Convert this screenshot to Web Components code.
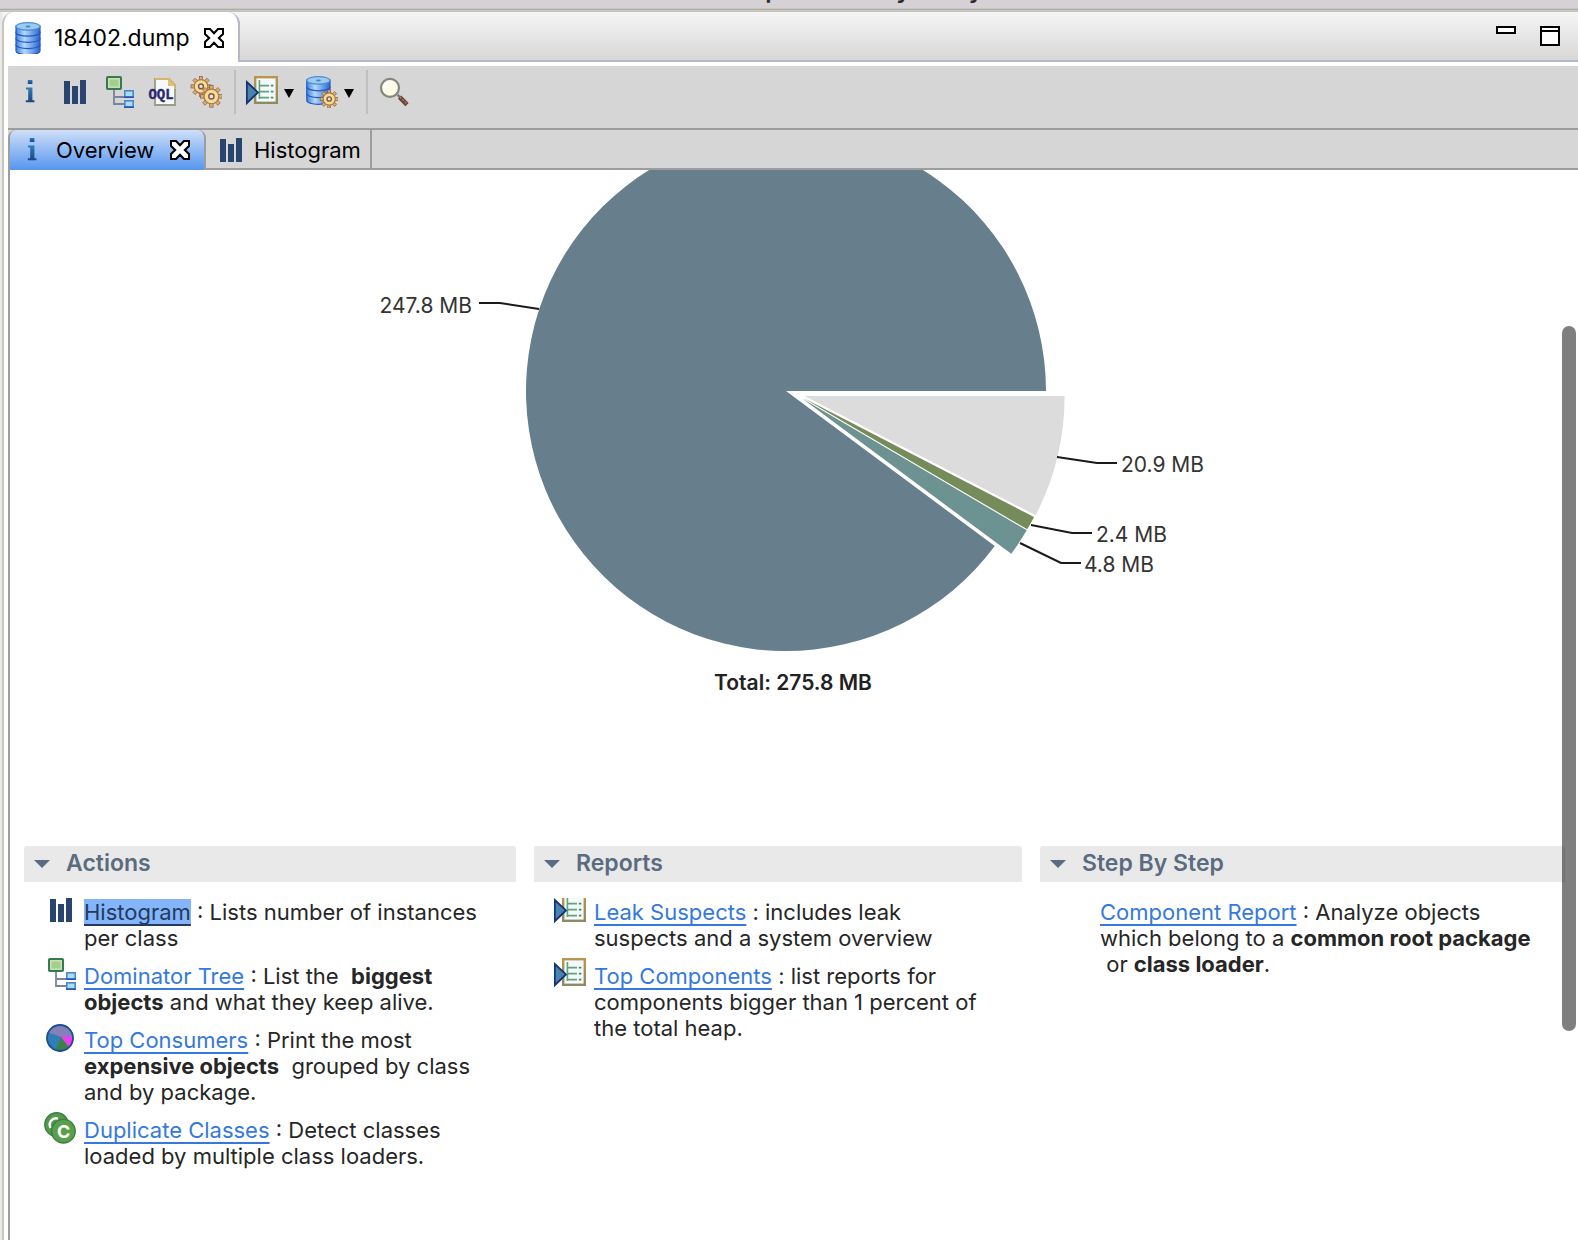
<!DOCTYPE html>
<html lang="en">
<head>
<meta charset="utf-8">
<title>Eclipse Memory Analyzer</title>
<style>
  html, body { margin: 0; height: 100%; }
  body { font-family: Inter, "Liberation Sans", sans-serif; font-size: 22px; color: #000; background: #fff; overflow: hidden; }
</style>
</head>
<body>
<mat-window>
  <mat-title slot="title">Eclipse Memory Analyzer</mat-title>
  <editor-tabs slot="tabs" label="18402.dump"></editor-tabs>
  <mat-toolbar slot="toolbar"></mat-toolbar>
  <page-tabs slot="pages"></page-tabs>
  <heap-pie></heap-pie>
  <section-grid>
    <tool-section heading="Actions">
      <tool-entry icon="hist"><tool-link selected>Histogram</tool-link> : Lists number of instances<br>per class</tool-entry>
      <tool-entry icon="tree"><tool-link>Dominator Tree</tool-link> : List the &nbsp;<b>biggest<br>objects</b> and what they keep alive.</tool-entry>
      <tool-entry icon="pie"><tool-link>Top Consumers</tool-link> : Print the most<br><b>expensive objects</b> &nbsp;grouped by class<br>and by package.</tool-entry>
      <tool-entry icon="dup"><tool-link>Duplicate Classes</tool-link> : Detect classes<br>loaded by multiple class loaders.</tool-entry>
    </tool-section>
    <tool-section heading="Reports">
      <tool-entry icon="report" cut><tool-link>Leak Suspects</tool-link> : includes leak<br>suspects and a system overview</tool-entry>
      <tool-entry icon="report"><tool-link>Top Components</tool-link> : list reports for<br>components bigger than 1 percent of<br>the total heap.</tool-entry>
    </tool-section>
    <tool-section heading="Step By Step">
      <tool-entry><tool-link>Component Report</tool-link> : Analyze objects<br>which belong to a <b>common root package</b><br>&nbsp;or <b>class loader</b>.</tool-entry>
    </tool-section>
  </section-grid>
</mat-window>

<script>
const cog = (cx, cy, r) => {
  let teeth = '';
  for (let a = 0; a < 360; a += 45)
    teeth += `<rect x="${cx - r * .16}" y="${cy - r}" width="${r * .32}" height="${r * .5}" fill="#dcae6c" stroke="#8a5a48" stroke-width=".35" transform="rotate(${a} ${cx} ${cy})"/>`;
  return teeth + `<circle cx="${cx}" cy="${cy}" r="${r * .68}" fill="#f8dc92" stroke="#a87848" stroke-width=".6"/>
    <circle cx="${cx}" cy="${cy}" r="${r * .24}" fill="#e6e0dc" stroke="#80584a" stroke-width=".7"/>`;
};
const disks = (x, y, w, n, step) => {
  let s = '';
  for (let i = n - 1; i >= 0; i--) {
    const t = y + i * step;
    s += `<path d="M${x} ${t + 1.8}v${step}a${w / 2} 1.9 0 0 0 ${w} 0v-${step}z" fill="url(#dk)" stroke="#2458c4" stroke-width=".6"/>`;
  }
  return `<defs><linearGradient id="dk"><stop offset="0" stop-color="#3f83dc"/><stop offset=".35" stop-color="#b4d9fa"/><stop offset="1" stop-color="#2a68cf"/></linearGradient></defs>${s}
    <ellipse cx="${x + w / 2}" cy="${y + 1.9}" rx="${w / 2}" ry="1.9" fill="#9ccbf0" stroke="#4b8bd8" stroke-width=".6"/>
    <ellipse cx="${x + w / 2}" cy="${y + 1.9}" rx="1.2" ry=".5" fill="#4a83b8"/>`;
};
const ICONS = {
  info: `<defs><linearGradient id="ig" x2="0" y2="1"><stop offset="0" stop-color="#2f7dbb"/><stop offset="1" stop-color="#1c4480"/></linearGradient></defs>
    <g fill="url(#ig)"><path d="M6.9 2h2.3v2H6.9z"/><path d="M6 5.8h3.2v6.3h1v1H5.9v-1h1.2V6.8H6z"/></g>`,
  hist: `<path fill="#2a4470" d="M3 2.5h3V14H3zM7 5h3v9H7zM11 2h3v12h-3z"/>`,
  tree: `<path d="M6 7v7h5M6 10.5h5" fill="none" stroke="#75859b" stroke-width=".9"/>
    <rect x="2.5" y=".5" width="7" height="6" rx=".4" fill="#a5cd8c" stroke="#387a50"/><rect x="3.4" y="1.4" width="5.2" height="4.2" fill="none" stroke="#c9e2b9" stroke-width=".7"/>
    <g stroke-width=".8"><rect x="11.4" y="7.4" width="4.2" height="3" fill="#a9def8" stroke="#4e86c8"/><rect x="11.4" y="12.4" width="4.2" height="3" fill="#a9def8" stroke="#4e86c8"/></g>
    <path d="M11 10.6h5M11 15.6h5" stroke="#2b52c0" stroke-width=".8"/>`,
  oql: `<path d="M4.5 1.5h7l3 3v10h-10z" fill="#f5f9fd" stroke="#9a9a86" stroke-width=".9"/><path d="M4.5 1.5h7l3 3v2" fill="none" stroke="#d6b56c" stroke-width=".9"/><path d="M11 1.5v3.5h3.5z" fill="#e3c172"/>
    <text x="1.2" y="11.5" font-family="Liberation Mono, monospace" font-weight="700" font-size="7" fill="#2b2870" stroke="#2b2870" stroke-width=".2">OQL</text>`,
  gears: cog(5.5, 5.2, 5) + cog(10.7, 10.2, 5.4),
  report: `<defs><linearGradient id="rg" x2="0" y2="1"><stop offset="0" stop-color="#b8964c"/><stop offset="1" stop-color="#8f8964"/></linearGradient></defs>
    <rect x="4.6" y=".6" width="10.8" height="12.8" fill="#f3f9fc" stroke="url(#rg)" stroke-width="1.2"/>
    <path d="M6.7 2v9.5M6.7 4.8h4.8M6.7 7.8h4.8M6.7 10.8h4.8" fill="none" stroke="#5fa573" stroke-width=".8"/><path d="M12.4 4.8h1.3M12.4 7.8h1.3M12.4 10.8h1.3" stroke="#478b62" stroke-width=".9"/>
    <path d="M.4 3l5.6 5.2L.4 13.6z" fill="#4a84ac" stroke="#123274" stroke-width=".9"/>`,
  db: disks(2, .3, 12, 4, 3.1),
  dbgear: disks(.4, .3, 11.6, 3, 3.4) + cog(11.6, 11.5, 4.5),
  search: `<path d="M9.8 9.4l1.6 1.6" stroke="#777" stroke-width="1.2"/><path d="M10.8 10.6l3.7 3.7" stroke="#6a4038" stroke-width="2.3"/><path d="M11 10.5l3.2 3.2" stroke="#b08468" stroke-width=".7" stroke-dasharray="1 .7"/>
    <circle cx="6" cy="5.9" r="4.5" fill="#fdfbe6" stroke="#85857d" stroke-width="1.1"/><path d="M3.2 6a2.8 2.8 0 0 1 2.8-2.8" fill="none" stroke="#fff"/>`,
  pie: `<circle cx="8" cy="8" r="6.6" fill="#8480b8"/><path d="M8.4 7.4L2 5.2a6.6 6.6 0 0 0 3.8 9z" fill="#2f7dba"/><path d="M8.4 7.4l-2.8 6.8a6.6 6.6 0 0 0 7-1.4z" fill="#3b8048"/><path d="M8.6 7.2h6a6.6 6.6 0 0 1-1.8 5.6z" fill="#f03af4"/>
    <circle cx="8" cy="8" r="6.5" fill="none" stroke="#1d4f8f" stroke-width=".9"/>`,
  dup: `<circle cx="6.3" cy="6.3" r="5.9" fill="#54994c" stroke="#3c7d48" stroke-width=".7"/><path d="M7 3.3A3.2 3.2 0 0 0 3.3 8" fill="none" stroke="#fff" stroke-width="1.2"/>
    <circle cx="9.7" cy="9.6" r="5.9" fill="#58a04c" stroke="#3c7d48" stroke-width=".7"/><text x="9.8" y="13" text-anchor="middle" font-family="Inter, sans-serif" font-weight="700" font-size="9" fill="#fff">C</text>`
};

const define = (name, css, html) => customElements.define(name, class extends HTMLElement {
  constructor() { super(); this.attachShadow({ mode: 'open' }); }
  connectedCallback() {
    const body = typeof html === 'function' ? html(this) : html;
    this.shadowRoot.innerHTML = `<style>:host,*{box-sizing:border-box}button{font:inherit;color:inherit;background:none;border:0;padding:0;margin:0}svg{display:block}${css}</style>${body}`;
  }
});

define('mat-icon', `:host{display:block;width:32px;height:32px;flex:none}`,
  el => `<svg width="32" height="32" viewBox="0 0 16 16" aria-hidden="true">${ICONS[el.getAttribute('name')] || ''}</svg>`);

define('close-button', `:host{display:block;flex:none}button{display:block}`,
  `<button aria-label="Close"><svg width="20" height="20" viewBox="0 0 10 10"><path d="M.5 .5H3L5 2.6 7 .5H9.5V3L7.4 5 9.5 7V9.5H7L5 7.4 3 9.5H.5V7L2.6 5 .5 3z" fill="#fff" stroke="#000"/></svg></button>`);

define('mat-title', `:host{display:flex;justify-content:center;align-items:flex-end;flex:none;height:8px;padding-left:166px;overflow:hidden;background:#d5d1d5;color:#2b2a2c}
  span{font-size:24px;font-weight:600;line-height:32px;height:34px;flex:none}`, `<span><slot></slot></span>`);

define('mat-window', `
  :host{display:flex;flex-direction:column;height:100vh;min-height:0}
  .rule{height:4px;flex:none;background:linear-gradient(#c8c6c5 0 1px,#afaeab 1px 2px,#c6c6bf 2px)}
  .frame{display:flex;flex-direction:column;flex:1;min-height:0;padding-left:2px;background:#e9e9e9}
  .inner{display:flex;flex-direction:column;flex:1;min-height:0;border-left:2px solid #c6c6bf;padding:4px 0 0 4px;background:#fff}
  .page{flex:1;min-height:0;position:relative;overflow:hidden;border-left:2px solid #9d9d9d;background:#fff}
  .thumb{position:absolute;right:2px;top:156px;bottom:209px;width:14px;border-radius:7px;background:rgba(0,0,0,.5)}`,
  `<slot name="title"></slot><div class="rule"></div>
   <div class="frame"><slot name="tabs"></slot><div class="inner"><slot name="toolbar"></slot><slot name="pages"></slot>
   <main class="page"><slot></slot><div class="thumb"></div></main></div></div>`);

define('editor-tabs', `
  :host{display:block;flex:none}
  .bar{display:flex;height:50px;background:linear-gradient(#f5f5f5,#d6d6d6)}
  .tab{display:flex;align-items:center;width:238px;padding:2px 14px 0 8px;background:#fff;border:2px solid #b4b8ca;border-width:0 2px 0 2px;border-left-color:#c6c6bf;border-radius:12px 12px 0 0}
  .name{flex:1;text-align:left;padding-left:10px;font-size:23px;line-height:28px}
  .rest{flex:1;display:flex;justify-content:flex-end;gap:24px;padding:14px 18px 0 0;border-bottom:2px solid #b4b8ca}
  .rest button{display:block;height:20px}`,
  el => `<div class="bar"><div class="tab"><mat-icon name="db"></mat-icon><button class="name">${el.getAttribute('label')}</button><close-button></close-button></div>
  <div class="rest"><button aria-label="Minimize"><svg width="20" height="20"><rect x="1" y="1" width="18" height="6" fill="#fff" stroke="#000" stroke-width="2"/></svg></button>
  <button aria-label="Maximize"><svg width="20" height="20"><path d="M1 1h18v18H1zM1 5h18" fill="#fff" stroke="#000" stroke-width="2"/></svg></button></div></div>`);

define('mat-toolbar', `
  :host{display:flex;gap:12px;height:62px;flex:none;padding:4px 6px;background:#d6d6d6}
  button{display:flex;height:32px;margin-top:6px}
  button.menu::after{content:"";align-self:center;margin:2px 0 0 6px;border:5px solid transparent;border-top:9px solid #000;border-bottom:0}
  i{width:2px;height:44px;margin-right:-2px;background:#bfbfbf}`,
  () => {
    const b = (n, l, m) => `<button aria-label="${l}"${m ? ' class="menu"' : ''}><mat-icon name="${n}"></mat-icon></button>`;
    return b('info', 'Overview') + b('hist', 'Histogram') + b('tree', 'Dominator Tree') + b('oql', 'OQL') + b('gears', 'Threads') + '<i></i>'
      + b('report', 'Run Report', 1) + b('dbgear', 'Queries', 1) + '<i></i>' + b('search', 'Search');
  });

define('page-tabs', `
  :host{display:flex;height:42px;flex:none;background:#d6d6d6;border:2px solid #9d9d9d;border-width:2px 0 2px 0}
  div{display:flex;align-items:center;height:38px;border-right:2px solid #9d9d9d}
  .on{width:198px;height:40px;padding:0 14px 0 6px;border-left:2px solid #9d9d9d;border-radius:8px 8px 0 0;background:linear-gradient(#cfdff8,#5596f0)}
  .off{width:166px;padding:2px 0 0 8px}
  button{text-align:left;line-height:28px;padding-left:8px}.on button{flex:1}`,
  `<div class="on"><mat-icon name="info"></mat-icon><button>Overview</button><close-button></close-button></div>
   <div class="off"><mat-icon name="hist"></mat-icon><button>Histogram</button></div>`);

define('heap-pie', `:host{display:block;height:676px}svg{margin:0 auto}text{font-size:21px;fill:#333}.b{font-weight:600;fill:#222}`,
  () => {
    const rad = d => d * Math.PI / 180, R = 260;
    const slice = (x, y, a, b, f) => `<path fill="${f}" d="M${x} ${y}L${x + R * Math.cos(rad(a))} ${y + R * Math.sin(rad(a))}A${R} ${R} 0 ${b - a > 180 ? 1 : 0} 1 ${x + R * Math.cos(rad(b))} ${y + R * Math.sin(rad(b))}z"/>`;
    return `<svg width="860" height="676" viewBox="-422 -221 860 676" role="img" aria-label="Heap size by object">
      ${slice(0, 0, 36.6, 360, '#677e8d')}${slice(18.6, 5, 0, 27.3, '#dcdcdc')}${slice(17, 6.8, 27.3, 30.4, '#768b5a')}${slice(16.5, 7.8, 30.4, 36.6, '#6c9292')}
      <g fill="none" stroke="#1a1a1a" stroke-width="2"><path d="M-307-88h21l39 6"/><path d="M271 66l40 6h20"/><path d="M245 134l41 8h20"/><path d="M234 152l41 20h20"/></g>
      <text x="-314" y="-78" text-anchor="end">247.8 MB</text><text x="335" y="81">20.9 MB</text><text x="310" y="151">2.4 MB</text><text x="298" y="181">4.8 MB</text>
      <text class="b" x="7" y="299" text-anchor="middle">Total: 275.8 MB</text></svg>`;
  });

define('section-grid', `:host{display:grid;grid-template-columns:492fr 488fr 525fr;gap:18px;padding:0 13px 0 14px}`, `<slot></slot>`);

define('tool-section', `
  :host{display:block;min-width:0}
  h2{margin:0;font-size:23px;background:#e9e9e9;border-radius:3px 3px 0 0}
  button{display:flex;align-items:center;width:100%;height:36px;padding:0 0 2px 10px;font-weight:600;color:#5b6b80;line-height:28px}
  button::before{content:"";margin:2px 16px 0 0;border:8px solid transparent;border-top:8px solid #5b6b80;border-bottom:0}
  .list{display:flex;flex-direction:column;gap:6px;padding:12px 0 0 20px}`,
  el => `<h2><button aria-expanded="true">${el.getAttribute('heading')}</button></h2><div class="list"><slot></slot></div>`);

define('tool-entry', `
  :host{display:flex;gap:8px;font-size:22px;line-height:26px;color:#262626;white-space:nowrap}
  :host([cut]) mat-icon{clip-path:inset(4px 0 0 0)}
  p{margin:0;padding:5px 0 1px}`,
  el => `<mat-icon name="${el.getAttribute('icon') || ''}"></mat-icon><p><slot></slot></p>`);

define('tool-link', `
  a{color:#3579de;text-decoration:underline;text-decoration-thickness:2px;text-underline-offset:4px;text-decoration-skip-ink:none}
  :host([selected]) a{color:#233a5c;background:#84b5fa}`,
  `<a href="#"><slot></slot></a>`);
</script>
</body>
</html>
